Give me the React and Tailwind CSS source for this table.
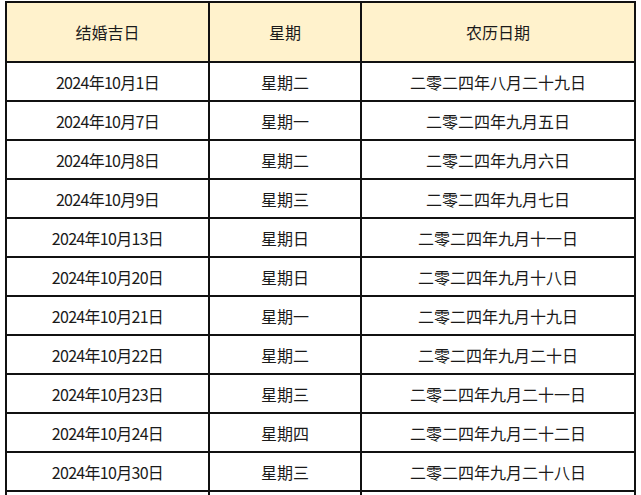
import React from "react";

const rows = [
  ["2024年10月1日", "星期二", "二零二四年八月二十九日"],
  ["2024年10月7日", "星期一", "二零二四年九月五日"],
  ["2024年10月8日", "星期二", "二零二四年九月六日"],
  ["2024年10月9日", "星期三", "二零二四年九月七日"],
  ["2024年10月13日", "星期日", "二零二四年九月十一日"],
  ["2024年10月20日", "星期日", "二零二四年九月十八日"],
  ["2024年10月21日", "星期一", "二零二四年九月十九日"],
  ["2024年10月22日", "星期二", "二零二四年九月二十日"],
  ["2024年10月23日", "星期三", "二零二四年九月二十一日"],
  ["2024年10月24日", "星期四", "二零二四年九月二十二日"],
  ["2024年10月30日", "星期三", "二零二四年九月二十八日"],
  ["", "", ""],
];

const cell =
  "flex items-center justify-center border-r-2 border-b-2 border-[#111] text-[16px] text-[#1a1a1a]";

export default function App() {
  return (
    <div
      className="w-[641px] h-[495px] overflow-hidden bg-white pt-[1px] pl-[5px]"
      style={{ fontFamily: '"Noto Sans CJK SC", "Noto Sans", sans-serif' }}
    >
      <div className="grid grid-cols-[203px_152px_274px] w-[631px] border-l-2 border-t-2 border-[#111]">
        <div className={`${cell} h-[60px] bg-[#fff2cc]`}>结婚吉日</div>
        <div className={`${cell} h-[60px] bg-[#fff2cc]`}>星期</div>
        <div className={`${cell} h-[60px] bg-[#fff2cc]`}>农历日期</div>
        {rows.map((r, i) => (
          <React.Fragment key={i}>
            <div className={`${cell} h-[39px] tracking-[-0.7px]`}>{r[0]}</div>
            <div className={`${cell} h-[39px]`}>{r[1]}</div>
            <div className={`${cell} h-[39px]`}>{r[2]}</div>
          </React.Fragment>
        ))}
      </div>
    </div>
  );
}
